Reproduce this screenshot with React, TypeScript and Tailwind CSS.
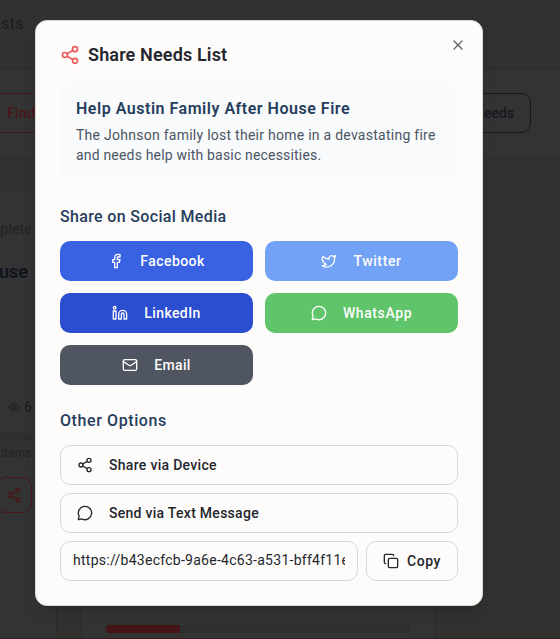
import type { ReactNode } from "react";
import { Copy, Eye, Facebook, Linkedin, Mail, MessageCircle, Share2, Twitter, X } from "lucide-react";

function SocialButton({ color, icon, label }: { color: string; icon: ReactNode; label: ReactNode }) {
  return (
    <button className={`flex h-10 items-center justify-center gap-4 rounded-[10px] text-sm font-medium text-[#fdfcfb] ${color}`}>
      {icon}
      {label}
    </button>
  );
}

function OptionButton({ icon, label }: { icon: ReactNode; label: ReactNode }) {
  return (
    <button className="flex h-10 w-full items-center gap-4 rounded-[10px] border border-[#dcd8d5] px-4 text-sm font-medium text-[#24262d]">
      {icon}
      {label}
    </button>
  );
}

function PageBehind() {
  return (
    <div className="flex h-full flex-col overflow-hidden border-b border-[#2f2225] bg-[#33312f] text-[#1a1d22]">
      <header className="flex h-[69px] shrink-0 items-start border-b border-[#2b2a29] pt-3">
        <span className="pl-px text-base leading-6 tracking-[0.4px]">sts</span>
      </header>
      <div className="flex h-[89px] shrink-0 items-start justify-between border-b border-[#2b2c2d] bg-[#333333] pt-6 pr-[29px]">
        <div className="flex h-10 w-20 items-center border-y border-[#421719] pl-[7px] text-sm font-medium tracking-[0.4px] text-[#4a1719]">Find</div>
        <div className="flex h-10 w-[110px] items-center justify-end rounded-[10px] border border-[#14181f] pr-4 text-sm font-medium text-[#14181f]">Needs</div>
      </div>
      <main className="flex min-h-0 grow gap-6 pt-8">
        <section className="w-[57px] shrink-0 overflow-hidden border-t border-r border-[#2b2c2d] bg-[#333333]">
          <div className="flex w-8 flex-col items-end">
            <span className="mt-7 text-sm leading-5 tracking-[0.2px] text-[#1f2226]">plete</span>
            <span className="mt-[19px] mr-1 text-lg leading-7 font-bold text-[#10151d]">use</span>
            <span className="mt-[111px] flex items-center gap-1 text-sm leading-5 text-[#1a1d22]">
              <Eye size={12} />6
            </span>
            <div className="mt-4 h-2 w-16 rounded-full bg-[#2e2e2e]" />
            <span className="mt-1 text-xs leading-4 tracking-[0.2px] whitespace-nowrap text-[#1f2226]">items</span>
            <div className="mt-4 flex h-9 w-9 shrink-0 items-center justify-center rounded-[10px] border border-[#4a1719] text-[#4a1719]">
              <Share2 size={16} />
            </div>
          </div>
        </section>
        <section className="flex w-[355px] flex-col justify-end border-x border-[#2b2c2d] bg-[#333333] px-6 pb-[5px]">
          <div className="h-2 overflow-hidden rounded-full bg-[#2e2e2e]">
            <div className="h-full w-[74px] bg-[#441416]" />
          </div>
        </section>
      </main>
    </div>
  );
}

export default function App() {
  return (
    <div className="relative h-[639px] w-[560px] overflow-hidden font-['Roboto','Liberation_Sans',sans-serif]">
      <PageBehind />
      <div role="dialog" className="absolute top-5 left-[35px] w-[448px] rounded-xl border border-[#dcd8d5] bg-[#fdfcfb] p-6 shadow-lg">
        <button aria-label="Close" className="absolute top-4 right-4 text-[#24262d] opacity-70">
          <X size={16} />
        </button>
        <h2 className="flex h-5 items-center gap-2 text-lg leading-5 font-semibold text-[#24262d]">
          <Share2 size={20} className="text-[#ee5c5c]" />
          <span className="tracking-[0.15px]">Share Needs List</span>
        </h2>
        <div className="mt-4 h-[100px] rounded-[10px] bg-[#f8fafc] p-4">
          <h3 className="mb-1 text-base leading-6 font-semibold tracking-[0.52px] whitespace-nowrap text-[#263d5c]">Help Austin Family After House Fire</h3>
          <p className="text-sm leading-5 whitespace-nowrap text-[#4b5563]">
            <span className="block tracking-[0.26px]">The Johnson family lost their home in a devastating fire</span>
            <span className="block tracking-[0.18px]">and needs help with basic necessities.</span>
          </p>
        </div>
        <h4 className="mt-6 text-base leading-6 font-medium text-[#263d5c]"><span className="tracking-[0.34px]">Share on Social Media</span></h4>
        <div className="mt-3 grid grid-cols-2 gap-3">
          <SocialButton color="bg-[#3962e3]" icon={<Facebook size={16} />} label={<span className="tracking-[0.45px]">Facebook</span>} />
          <SocialButton color="bg-[#72a2f6]" icon={<Twitter size={16} />} label={<span className="tracking-[0.6px]">Twitter</span>} />
          <SocialButton color="bg-[#2b4dcf]" icon={<Linkedin size={16} />} label={<span className="tracking-[0.4px]">LinkedIn</span>} />
          <SocialButton color="bg-[#5fc46a]" icon={<MessageCircle size={16} />} label={<span className="tracking-[0.6px]">WhatsApp</span>} />
          <SocialButton color="bg-[#4f5561]" icon={<Mail size={16} />} label={<span className="tracking-[0.35px]">Email</span>} />
        </div>
        <h4 className="mt-6 text-base leading-6 font-medium text-[#263d5c]"><span className="tracking-[0.6px]">Other Options</span></h4>
        <div className="mt-3 flex flex-col gap-2">
          <OptionButton icon={<Share2 size={16} />} label={<span className="tracking-[0.3px]">Share via Device</span>} />
          <OptionButton icon={<MessageCircle size={16} />} label={<span className="tracking-[0.28px]">Send via Text Message</span>} />
          <div className="flex gap-2">
            <div className="flex h-10 min-w-0 flex-1 items-center rounded-[10px] border border-[#dcd8d5] px-3 text-sm text-[#24262d]">
              <span className="mb-0.5 w-full overflow-hidden tracking-[0.27px] whitespace-nowrap">https://b43ecfcb-9a6e-4c63-a531-bff4f11e</span>
            </div>
            <button className="flex h-10 w-[92px] items-center justify-center gap-2 rounded-[10px] border border-[#dcd8d5] text-sm font-medium text-[#24262d]">
              <Copy size={16} />
              <span className="tracking-[0.6px]">Copy</span>
            </button>
          </div>
        </div>
      </div>
    </div>
  );
}
